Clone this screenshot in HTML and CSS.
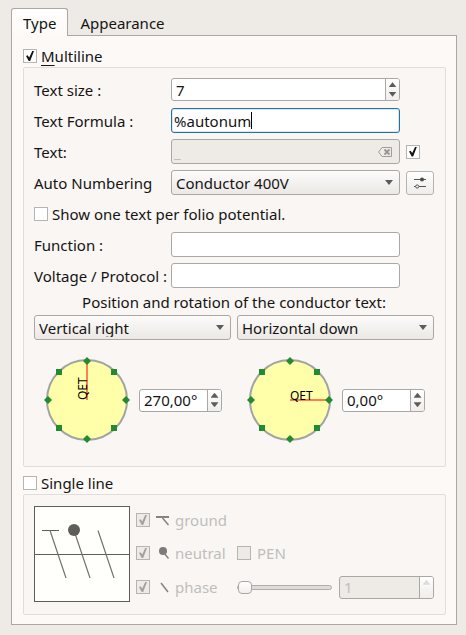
FILE: index.html
```html
<!DOCTYPE html>
<html lang="en">
<head>
<meta charset="utf-8">
<meta name="viewport" content="width=device-width, initial-scale=1">
<title>Conductor properties</title>
<link rel="stylesheet" href="styles.css">
</head>
<body>
<main class="dialog">
  <div class="tabs" role="tablist">
    <button class="tab tab-active" type="button" role="tab" aria-selected="true">Type</button>
    <button class="tab" type="button" role="tab" aria-selected="false">Appearance</button>
  </div>
  <form class="pane" role="tabpanel">
    <div class="check-row">
      <input class="check" type="checkbox" id="multiline" checked>
      <label for="multiline"><span class="mnemonic">M</span>ultiline</label>
    </div>
    <section class="group multiline">
      <div class="fields">
        <label for="size">Text size :</label>
        <div class="spin">
          <input class="spin-value" id="size" type="text" value="7">
          <div class="spin-buttons">
            <button type="button" class="up" aria-label="Increase"></button>
            <button type="button" class="down" aria-label="Decrease"></button>
          </div>
        </div>

        <label class="first" for="formula">Text Formula :</label>
        <div class="line-edit focused">
          <input class="formula" id="formula" type="text" value="%autonum"><span class="caret"></span>
        </div>

        <label class="first" for="text">Text:</label>
        <div class="line-edit disabled">
          <input class="line-value" id="text" type="text" value="_" disabled>
          <svg class="clear" width="14" height="10" viewBox="0 0 14 10" aria-hidden="true">
            <path d="M4 .5H13.500V9.500H4L.6 5Z" fill="none" stroke="#a09d9a"/>
            <path d="M6.500 2.500L11.500 7.500M11.500 2.500L6.500 7.500" stroke="#9a9794" stroke-width="2"/>
          </svg>
        </div>
        <input class="check" type="checkbox" aria-label="Show text" checked>

        <label class="first" for="numbering">Auto Numbering</label>
        <div class="combo"><select id="numbering"><option>Conductor 400V</option></select></div>
        <button class="tool" type="button" aria-label="Configure numbering">
          <svg width="12" height="12" viewBox="0 0 12 12" aria-hidden="true">
            <path d="M0 2.500H12M0 9.500H1.500M5 9.500H12" stroke="#555"/>
            <circle cx="8" cy="2.500" r="2" fill="#4a4a4a"/>
            <circle cx="3.200" cy="9.500" r="1.600" fill="none" stroke="#555"/>
          </svg>
        </button>

        <div class="check-row wide">
          <input class="check" type="checkbox" id="folio">
          <label for="folio">Show one text per folio potential.</label>
        </div>

        <label class="first" for="function">Function :</label>
        <div class="line-edit"><input class="line-value" id="function" type="text"></div>
        <label class="first" for="voltage">Voltage / Protocol :</label>
        <div class="line-edit"><input class="line-value" id="voltage" type="text"></div>
      </div>

      <h2 class="caption">Position and rotation of the conductor text:</h2>

      <div class="halves">
        <div class="combo"><select aria-label="Vertical position"><option>Vertical right</option></select></div>
        <div class="combo"><select aria-label="Horizontal position"><option>Horizontal down</option></select></div>
        <div class="rotation">
          <svg class="dial" width="84" height="86" viewBox="0 0 84 86" role="img" aria-label="Vertical text rotation">
            <circle cx="42" cy="43" r="40" fill="#ffffaa" stroke="#a0a4a4" stroke-width="2"/>
            <path d="M42 43V4" stroke="#ff7f50" stroke-width="2"/>
            <text class="dial-text" transform="translate(42 43) rotate(-90)">QET</text>
            <g fill="#228b30">
              <path d="M42 0l4 4-4 4-4-4zM42 78l4 4-4 4-4-4zM3 39l4 4-4 4-4-4zM81 39l4 4-4 4-4-4z"/>
              <path d="M11 12h6v6h-6zM66 12h6v6h-6zM11 68h6v6h-6zM66 68h6v6h-6z"/>
            </g>
          </svg>
          <div class="spin">
            <input class="spin-value" type="text" value="270,00°" aria-label="Vertical angle">
            <div class="spin-buttons">
              <button type="button" class="up" aria-label="Increase"></button>
              <button type="button" class="down" aria-label="Decrease"></button>
            </div>
          </div>
        </div>
        <div class="rotation">
          <svg class="dial" width="84" height="86" viewBox="0 0 84 86" role="img" aria-label="Horizontal text rotation">
            <circle cx="42" cy="43" r="40" fill="#ffffaa" stroke="#a0a4a4" stroke-width="2"/>
            <path d="M42 43H81" stroke="#ff7f50" stroke-width="2"/>
            <text class="dial-text" transform="translate(42 43)">QET</text>
            <g fill="#228b30">
              <path d="M42 0l4 4-4 4-4-4zM42 78l4 4-4 4-4-4zM3 39l4 4-4 4-4-4zM81 39l4 4-4 4-4-4z"/>
              <path d="M11 12h6v6h-6zM66 12h6v6h-6zM11 68h6v6h-6zM66 68h6v6h-6z"/>
            </g>
          </svg>
          <div class="spin">
            <input class="spin-value" type="text" value="0,00°" aria-label="Horizontal angle">
            <div class="spin-buttons">
              <button type="button" class="up" aria-label="Increase"></button>
              <button type="button" class="down" aria-label="Decrease"></button>
            </div>
          </div>
        </div>
      </div>
    </section>

    <div class="check-row single-title">
      <input class="check" type="checkbox" id="single">
      <label for="single">Single line</label>
    </div>
    <section class="group single">
      <svg class="preview" width="96" height="96" viewBox="0 0 96 96" role="img" aria-label="Single line preview">
        <rect x=".5" y=".5" width="95" height="95" fill="#fffffb" stroke="#5e5d5a"/>
        <path d="M0 48.500H96M8 24.500H25" stroke="#5e5d5a"/>
        <path d="M16 24.500L32 72M40 24.500L56 72M64 24.500L80 72" stroke="#74736f" stroke-width="1.200"/>
        <circle cx="40" cy="24" r="6" fill="#5e5d5a"/>
      </svg>
      <div class="wires">
        <div class="check-row">
          <input class="check" type="checkbox" id="ground" checked disabled>
          <label for="ground">
            <svg width="14" height="14" viewBox="0 0 14 14" aria-hidden="true"><path d="M0 4H13" stroke="#848381" stroke-width="2"/><path d="M6.500 5L12.500 12" stroke="#848381" stroke-width="1.500"/></svg>
            ground
          </label>
        </div>
        <div class="check-row">
          <input class="check" type="checkbox" id="neutral" checked disabled>
          <label for="neutral">
            <svg width="14" height="14" viewBox="0 0 14 14" aria-hidden="true"><circle cx="7" cy="5" r="4" fill="#7c7b79"/><path d="M8 7L12.500 12.500" stroke="#848381" stroke-width="1.500"/></svg>
            neutral
          </label>
        </div>
        <div class="check-row">
          <input class="check" type="checkbox" id="pen" disabled>
          <label for="pen">PEN</label>
        </div>
        <div class="check-row">
          <input class="check" type="checkbox" id="phase" checked disabled>
          <label for="phase">
            <svg width="14" height="14" viewBox="0 0 14 14" aria-hidden="true"><path d="M5 3L12 12" stroke="#848381" stroke-width="1.500"/></svg>
            phase
          </label>
        </div>
        <div class="phase-count">
          <input class="slider" type="range" min="1" max="3" value="1" aria-label="Phase count" disabled>
          <div class="spin spin-disabled">
            <input class="spin-value" type="text" value="1" aria-label="Phases" disabled>
            <div class="spin-buttons">
              <button type="button" class="up" aria-label="Increase" disabled></button>
              <button type="button" class="down" aria-label="Decrease" disabled></button>
            </div>
          </div>
        </div>
      </div>
    </section>
  </form>
</main>
</body>
</html>
```
FILE: styles.css
```css
* {
  box-sizing: border-box;
}

body {
  margin: 0;
  min-height: 100vh;
  background: #eeebe6;
  color: #141414;
  font: 15px/18px "Noto Sans", "Open Sans", sans-serif;
}

button,
input,
select {
  margin: 0;
  padding: 0;
  border: 0;
  background: none;
  color: inherit;
  font: inherit;
}

input {
  min-width: 0;
  outline: 0;
}

label {
  white-space: nowrap;
}

.dialog {
  padding: 8px 9px 10px 11px;
}

/* Tabs */
.tabs {
  display: flex;
  align-items: flex-end;
}

.tab {
  height: 24px;
  padding: 0 12px;
}

.tab-active {
  position: relative;
  z-index: 1;
  height: 28px;
  margin-bottom: -1px;
  padding: 0 11px;
  border: 1px solid #aaa7a4;
  border-bottom: 0;
  border-radius: 3px 3px 0 0;
  background: linear-gradient(#fff, #fdf9f6);
}

.pane {
  padding: 11px 10px 9px 11px;
  border: 1px solid #aaa7a4;
  background: #fdf9f6;
}

/* Check boxes */
.check-row {
  display: flex;
  align-items: center;
  gap: 4px;
}

.check-row label {
  display: flex;
  align-items: center;
}

.mnemonic {
  text-decoration: underline;
  text-underline-offset: 3px;
}

.check {
  appearance: none;
  flex: none;
  display: grid;
  place-items: center;
  width: 14px;
  height: 14px;
  border: 1px solid #b6b3b0;
  background: #fff;
}

.check:checked::after {
  content: "";
  width: 8px;
  height: 10px;
  background: #141414;
  clip-path: polygon(0 50%, 20% 42%, 40% 66%, 78% 0, 100% 0, 52% 100%, 34% 100%);
}

.check:disabled {
  background: #eeebe7;
}

.check:disabled:checked::after {
  background: #a3a09d;
}

/* Group frames */
.group {
  border: 1px solid #e0dddb;
  border-radius: 2px;
  background: #faf6f3;
}

.multiline {
  margin-top: 2px;
  padding: 9px 11px 23px 10px;
}

/* Form rows */
.fields {
  display: grid;
  grid-template-columns: 131px minmax(0, 1fr) 28px;
  grid-auto-rows: 25px;
  align-items: center;
  gap: 6px;
}

.first {
  grid-column: 1;
}

.wide {
  grid-column: 1 / -1;
}

.line-edit {
  display: flex;
  align-items: center;
  height: 25px;
  padding: 0 7px 0 2px;
  border: 1px solid #aaa7a4;
  border-radius: 3px;
  background: #fff;
}

.focused {
  border-color: #2470a2;
  box-shadow: inset 0 0 0 1px #dbe9f2;
}

.disabled {
  background: #eeebe7;
  color: #bebebe;
}

.line-value {
  flex: 1;
}

.formula {
  field-sizing: content;
}

.caret {
  width: 1px;
  height: 17px;
  background: #000;
}

.clear {
  flex: none;
}

.tool {
  display: grid;
  place-items: center;
  height: 24px;
  border: 1px solid #b6b3b0;
  border-radius: 3px;
  background: linear-gradient(#fff, #efecea);
}

/* Drop-downs */
.combo {
  display: grid;
  align-items: center;
}

.combo select,
.combo::after {
  grid-area: 1 / 1;
}

.combo select {
  appearance: none;
  width: 100%;
  height: 25px;
  padding: 0 22px 0 4px;
  border: 1px solid #aaa7a4;
  border-radius: 3px;
  background: linear-gradient(#fdfcfb, #ebe8e5);
}

.combo::after {
  content: "";
  justify-self: end;
  width: 8px;
  height: 5px;
  margin-right: 7px;
  background: #5c5b59;
  clip-path: polygon(0 0, 100% 0, 50% 100%);
  pointer-events: none;
}

/* Spin boxes */
.spin {
  display: flex;
  height: 23px;
  overflow: hidden;
  border: 1px solid #aaa7a4;
  border-radius: 3px;
  background: #fff;
}

.spin-value {
  flex: 1;
  padding-left: 4px;
}

.spin-buttons {
  display: grid;
  grid-template-rows: 1fr 1fr;
  flex: none;
  width: 14px;
  padding: 1px 0;
  border-left: 1px solid #aaa7a4;
  background: linear-gradient(#fff, #f0edeb);
}

.spin-buttons button {
  display: grid;
  justify-items: center;
  align-items: center;
}

.spin-buttons button::before {
  content: "";
  width: 8px;
  height: 5px;
  background: #5c5b59;
}

.up::before {
  clip-path: polygon(50% 0, 100% 100%, 0 100%);
}

.down::before {
  clip-path: polygon(0 0, 100% 0, 50% 100%);
}

.spin-disabled {
  background: #eeebe7;
  color: #bebebe;
}

.spin-disabled .up::before {
  background: #dedbd9;
}

.spin-disabled .down::before {
  background: #f4f2f0;
}

/* Position and rotation */
.caption {
  margin: 5px 0 4px;
  font: inherit;
  text-align: center;
}

.halves {
  display: grid;
  grid-template-columns: 1fr 1fr;
  gap: 17px 6px;
}

.rotation {
  display: flex;
  align-items: center;
  gap: 10px;
  padding-left: 11px;
}

.rotation .spin {
  width: 83px;
}

.dial {
  flex: none;
  overflow: visible;
}

.dial-text {
  font-size: 12px;
}

/* Single line */
.single-title {
  margin-top: 7px;
}

.single {
  display: flex;
  align-items: center;
  gap: 6px;
  margin-top: 2px;
  padding: 11px 11px 12px 10px;
  color: #bebebe;
}

.preview {
  flex: none;
}

.wires {
  flex: 1;
  display: grid;
  grid-template-columns: 95px minmax(0, 1fr);
  grid-template-rows: 28px 38px 30px;
  align-items: center;
  column-gap: 6px;
}

.wires > :first-child {
  grid-column: 1 / -1;
}

.wires .check-row {
  gap: 6px;
}

.wires label {
  gap: 5px;
}

.phase-count {
  display: grid;
  grid-template-columns: 1fr 1fr;
  align-items: center;
  gap: 7px;
}

.slider {
  appearance: none;
  width: 100%;
  height: 14px;
}

.slider::-webkit-slider-runnable-track {
  height: 5px;
  border: 1px solid #b0adaa;
  border-radius: 3px;
  background: #dedbd8;
}

.slider::-webkit-slider-thumb {
  appearance: none;
  width: 14px;
  height: 13px;
  margin-top: -5px;
  border: 1px solid #aaa7a4;
  border-radius: 4px;
  background: linear-gradient(#fff, #f2efed);
}
```
